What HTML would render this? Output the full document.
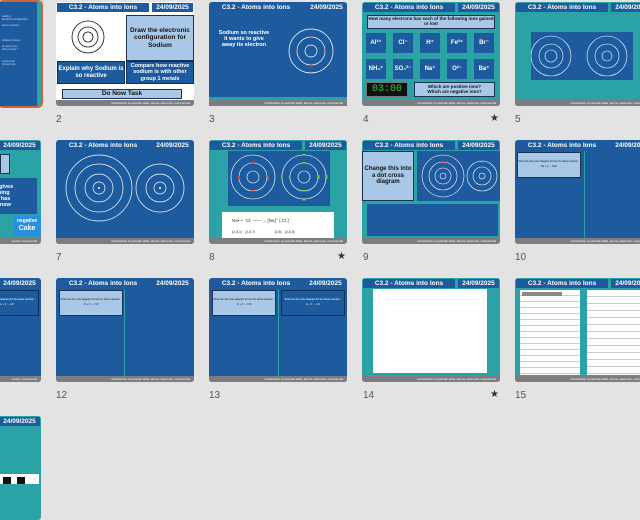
<!DOCTYPE html>
<html><head><meta charset="utf-8"><style>
*{margin:0;padding:0;box-sizing:border-box}
body{width:640px;height:480px;background:#e3e3e3;position:relative;overflow:hidden;font-family:"Liberation Sans",sans-serif}
.s{position:absolute;width:138px;height:104px;border-radius:3px;overflow:hidden;background:#2ba2a6}
.hd{position:absolute;top:1px;left:1px;width:92px;height:9px;background:#1d5b9e;color:#fff;font-size:6.5px;font-weight:bold;text-align:center;line-height:9px}
.dt{position:absolute;top:1px;left:96px;width:41px;height:9px;background:#1d5b9e;color:#fff;font-size:6.5px;font-weight:bold;text-align:center;line-height:9px}
.ft{position:absolute;bottom:0;left:0;width:138px;height:6px;background:#7b7d80;color:#fff;font-size:3px;line-height:6px;text-align:right;padding-right:4px}
.b{position:absolute;font-weight:bold;text-align:center;display:flex;align-items:center;justify-content:center;line-height:1.1}
.lb{background:#a9c8e8;border:1px solid #203050;color:#111}
.db{background:#1d5b9e;color:#fff;border:1px solid #0e2f55}
.n{position:absolute;font-size:10px;color:#555}
.st{position:absolute;font-size:10px;color:#333}
svg{position:absolute}
</style></head><body>

<!-- slide 1 (selected) -->
<div style="position:absolute;left:-2px;top:0;width:45px;height:108px;border:2px solid #d2643a;border-radius:5px"></div>
<div class="s" style="left:-97px;top:2px;background:#1d5b9e;border-right:4px solid #2ba2a6"></div>
<div style="position:absolute;left:2px;top:15px;width:30px;font-size:2.5px;color:#cde;line-height:3px">reading<br>Electronic configuration<br><br>atoms and ions<br><br><br><br><br>between Groups<br><br>to react in the<br>with a Group 7<br><br><br><br>compounds<br>formed ionic</div>

<!-- slide 2 -->
<div class="s" style="left:56px;top:2px;background:#fff">
<div class="hd">C3.2 - Atoms into Ions</div><div class="dt">24/09/2025</div>
<svg width="60" height="50" style="left:2px;top:10px"><g fill="none" stroke="#111" stroke-width="0.8"><circle cx="30" cy="25" r="16"/><circle cx="30" cy="25" r="10"/><circle cx="30" cy="25" r="5"/></g></svg>
<div class="b lb" style="left:70px;top:13px;width:68px;height:46px;font-size:6.5px">Draw the electronic configuration for Sodium</div>
<div class="b db" style="left:1px;top:59px;width:68px;height:23px;font-size:6px">Explain why Sodium is so reactive</div>
<div class="b db" style="left:70px;top:59px;width:68px;height:23px;font-size:5.5px">Compare how reactive sodium is with other group 1 metals</div>
<div class="b lb" style="left:6px;top:87px;width:120px;height:10px;font-size:6.5px">Do Now Task</div>
<div class="ft">Introduction to periodic table, atoms, elements, compounds</div>
</div>

<!-- slide 3 -->
<div class="s" style="left:209px;top:2px;background:#1d5b9e;border-bottom:9px solid #2ba2a6">
<div class="hd">C3.2 - Atoms into Ions</div><div class="dt" style="left:97px">24/09/2025</div>
<div class="b" style="left:8px;top:28px;width:54px;font-size:5.5px;color:#fff">Sodium so reactive it wants to give away its electron</div>
<svg width="50" height="50" style="left:78px;top:25px"><g fill="none" stroke="#fff" stroke-width="0.7"><circle cx="24" cy="24" r="22"/><circle cx="24" cy="24" r="14"/><circle cx="24" cy="24" r="6"/></g><g fill="#e55"><circle cx="24" cy="10" r="1.2"/><circle cx="24" cy="38" r="1.2"/><circle cx="10" cy="24" r="1.2"/><circle cx="38" cy="24" r="1.2"/></g></svg>
</div>
<div class="ft" style="left:209px;top:100px;position:absolute">Introduction to periodic table, atoms, elements, compounds</div>

<!-- slide 4 -->
<div class="s" style="left:362px;top:2px">
<div class="hd">C3.2 - Atoms into Ions</div><div class="dt">24/09/2025</div>
<div class="b lb" style="left:5px;top:13px;width:128px;height:14px;font-size:4.5px">How many electrons has each of the following ions gained or lost</div>
<div class="b db" style="left:4px;top:31px;width:20px;height:20px;font-size:6px;border:none">Al³⁺</div>
<div class="b db" style="left:31px;top:31px;width:20px;height:20px;font-size:6px;border:none">Cl⁻</div>
<div class="b db" style="left:58px;top:31px;width:20px;height:20px;font-size:6px;border:none">H⁺</div>
<div class="b db" style="left:85px;top:31px;width:20px;height:20px;font-size:6px;border:none">Fe³⁺</div>
<div class="b db" style="left:112px;top:31px;width:20px;height:20px;font-size:6px;border:none">Br⁻</div>
<div class="b db" style="left:4px;top:57px;width:20px;height:20px;font-size:6px;border:none">NH₄⁺</div>
<div class="b db" style="left:31px;top:57px;width:20px;height:20px;font-size:6px;border:none">SO₄²⁻</div>
<div class="b db" style="left:58px;top:57px;width:20px;height:20px;font-size:6px;border:none">Na⁺</div>
<div class="b db" style="left:85px;top:57px;width:20px;height:20px;font-size:6px;border:none">O²⁻</div>
<div class="b db" style="left:112px;top:57px;width:20px;height:20px;font-size:6px;border:none">Ba⁺</div>
<div class="b" style="left:4px;top:80px;width:42px;height:15px;background:#111;border:1px solid #777;color:#3c3;font-family:'Liberation Mono',monospace;font-size:10px;font-weight:normal">03:00</div>
<div class="b lb" style="left:52px;top:80px;width:81px;height:15px;font-size:4.5px">Which are positive ions?<br>Which are negative ions?</div>
<div class="ft">Introduction to periodic table, atoms, elements, compounds</div>
</div>
<div class="st" style="left:490px;top:113px">★</div>
<div class="n" style="left:363px;top:114px">4</div>

<!-- slide 5 -->
<div class="s" style="left:515px;top:2px">
<div class="hd">C3.2 - Atoms into Ions</div><div class="dt">24/09/2025</div>
<div style="position:absolute;left:16px;top:30px;width:102px;height:48px;background:#1d5b9e"></div>
<svg width="110" height="50" style="left:16px;top:30px"><g fill="none" stroke="#fff" stroke-width="0.6"><circle cx="20" cy="24" r="20"/><circle cx="20" cy="24" r="12"/><circle cx="20" cy="24" r="6"/><circle cx="76" cy="24" r="20"/><circle cx="76" cy="24" r="12"/><circle cx="76" cy="24" r="5"/></g></svg>
<div class="ft">Introduction to periodic table, atoms, elements, compounds</div>
</div>
<div class="n" style="left:56px;top:114px">2</div>
<div class="n" style="left:209px;top:114px">3</div>
<div class="n" style="left:515px;top:114px">5</div>

<!-- row 2 -->
<!-- slide 6 -->
<div class="s" style="left:-97px;top:140px">
<div class="dt">24/09/2025</div>
<div style="position:absolute;left:97px;top:14px;width:10px;height:20px;background:#a9c8e8;border:1px solid #203050"></div>
<div class="b db" style="left:90px;top:38px;width:44px;height:36px;font-size:5.5px;justify-content:flex-start;border:none">al gives<br>ming<br>h has<br>s now</div>
<div class="b" style="left:110px;top:76px;width:28px;height:20px;background:#2a8fe0;color:#fff;font-size:5px;flex-direction:column">negative<br><span style="font-size:7px">Cake</span></div>
<div class="ft">ments, compounds</div>
</div>

<!-- slide 7 -->
<div class="s" style="left:56px;top:140px;background:#1d5b9e">
<div class="hd">C3.2 - Atoms into Ions</div><div class="dt">24/09/2025</div>
<svg width="138" height="85" style="left:0;top:12px"><g fill="none" stroke="#fff" stroke-width="0.7"><circle cx="43" cy="36" r="33"/><circle cx="43" cy="36" r="24"/><circle cx="43" cy="36" r="14"/><circle cx="43" cy="36" r="6"/><circle cx="104" cy="36" r="24"/><circle cx="104" cy="36" r="14"/><circle cx="104" cy="36" r="6"/></g><circle cx="43" cy="36" r="1" fill="#fff"/><circle cx="104" cy="36" r="1" fill="#fff"/></svg>
<div class="ft">Introduction to periodic table, atoms, elements, compounds</div>
</div>

<!-- slide 8 -->
<div class="s" style="left:209px;top:140px">
<div class="hd">C3.2 - Atoms into Ions</div><div class="dt">24/09/2025</div>
<div style="position:absolute;left:19px;top:11px;width:102px;height:55px;background:#1d5b9e"></div>
<svg width="102" height="55" style="left:19px;top:11px"><g fill="none" stroke="#fff" stroke-width="0.6"><circle cx="25" cy="26" r="22"/><circle cx="25" cy="26" r="14"/><circle cx="25" cy="26" r="6"/><circle cx="76" cy="26" r="22"/><circle cx="76" cy="26" r="14"/><circle cx="76" cy="26" r="6"/></g><g fill="#e55"><rect x="23" y="11" width="4" height="1.5"/><rect x="23" y="39" width="4" height="1.5"/><rect x="10" y="25" width="1.5" height="4"/><rect x="39" y="25" width="1.5" height="4"/></g><g fill="#7c3"><rect x="74" y="3" width="4" height="1.5"/><rect x="74" y="48" width="4" height="1.5"/><rect x="74" y="11" width="4" height="1.5"/><rect x="74" y="39" width="4" height="1.5"/><rect x="61" y="24" width="1.5" height="4"/><rect x="90" y="24" width="1.5" height="4"/><rect x="53" y="24" width="1.5" height="4"/><rect x="98" y="24" width="1.5" height="4"/></g></svg>
<div style="position:absolute;left:13px;top:72px;width:112px;height:28px;background:#fff;font-size:4.5px;color:#333">
<div style="position:absolute;left:10px;top:6px">Na• + ·Cl:  ——→  [Na]⁺ [:Cl:]⁻</div>
<div style="position:absolute;left:10px;top:18px;font-size:3.5px">(2,8,1)&nbsp;&nbsp;&nbsp;(2,8,7)&nbsp;&nbsp;&nbsp;&nbsp;&nbsp;&nbsp;&nbsp;&nbsp;&nbsp;&nbsp;&nbsp;&nbsp;&nbsp;&nbsp;&nbsp;&nbsp;&nbsp;&nbsp;&nbsp;&nbsp;(2,8)&nbsp;&nbsp;&nbsp;(2,8,8)</div>
</div>
<div class="ft">Introduction to periodic table, atoms, elements, compounds</div>
</div>
<div class="st" style="left:337px;top:251px">★</div>

<!-- slide 9 -->
<div class="s" style="left:362px;top:140px">
<div class="hd">C3.2 - Atoms into Ions</div><div class="dt">24/09/2025</div>
<div class="b lb" style="left:0;top:11px;width:52px;height:50px;font-size:6px">Change this into a dot cross diagram</div>
<div style="position:absolute;left:55px;top:11px;width:83px;height:50px;background:#1d5b9e"></div>
<svg width="83" height="50" style="left:55px;top:11px"><g fill="none" stroke="#fff" stroke-width="0.6"><circle cx="26" cy="25" r="21"/><circle cx="26" cy="25" r="14"/><circle cx="26" cy="25" r="8"/><circle cx="26" cy="25" r="3"/><circle cx="65" cy="25" r="15"/><circle cx="65" cy="25" r="9"/><circle cx="65" cy="25" r="3"/></g><g fill="#e55"><rect x="24" y="4" width="4" height="1.2"/><rect x="24" y="11" width="4" height="1.2"/><rect x="24" y="38" width="4" height="1.2"/></g><rect x="63" y="10" width="4" height="1.2" fill="#7c3"/></svg>
<div style="position:absolute;left:5px;top:64px;width:131px;height:32px;background:#1d5b9e"></div>
<div class="ft">Introduction to periodic table, atoms, elements, compounds</div>
</div>

<!-- slide 10 -->
<div class="s" style="left:515px;top:140px;background:#1d5b9e">
<div class="hd">C3.2 - Atoms into Ions</div><div class="dt">24/09/2025</div>
<div style="position:absolute;left:69px;top:11px;width:1px;height:87px;background:#2ba2a6"></div>
<div class="b lb" style="left:2px;top:12px;width:64px;height:26px;font-size:2.5px;font-weight:normal;flex-direction:column">Draw the dot cross diagram for the the below reaction :<br><br>Na + F → NaF</div>
<div class="ft">Introduction to periodic table, atoms, elements, compounds</div>
</div>
<div class="n" style="left:56px;top:252px">7</div>
<div class="n" style="left:209px;top:252px">8</div>
<div class="n" style="left:363px;top:252px">9</div>
<div class="n" style="left:515px;top:252px">10</div>

<!-- row 3 -->
<div class="s" style="left:-97px;top:278px;background:#1d5b9e">
<div class="dt">24/09/2025</div>
<div class="b db" style="left:72px;top:12px;width:64px;height:26px;font-size:2.5px;font-weight:normal;flex-direction:column">Draw the dot cross diagram for the below reaction :<br><br>Li + F → LiF</div>
<div class="ft">ments, compounds</div>
</div>
<div class="s" style="left:56px;top:278px;background:#1d5b9e">
<div class="hd">C3.2 - Atoms into Ions</div><div class="dt">24/09/2025</div>
<div style="position:absolute;left:68px;top:11px;width:1px;height:87px;background:#2ba2a6"></div>
<div class="b lb" style="left:3px;top:12px;width:64px;height:26px;font-size:2.5px;font-weight:normal;flex-direction:column">Draw the dot cross diagram for the the below reaction :<br><br>Fr + F → FrF</div>
<div class="ft">Introduction to periodic table, atoms, elements, compounds</div>
</div>
<div class="s" style="left:209px;top:278px;background:#1d5b9e">
<div class="hd">C3.2 - Atoms into Ions</div><div class="dt">24/09/2025</div>
<div style="position:absolute;left:69px;top:11px;width:1px;height:87px;background:#2ba2a6"></div>
<div class="b lb" style="left:3px;top:12px;width:64px;height:26px;font-size:2.5px;font-weight:normal;flex-direction:column">Draw the dot cross diagram for the the below reaction :<br><br>Fr + F → FrF</div>
<div class="b db" style="left:72px;top:12px;width:64px;height:26px;font-size:2.5px;font-weight:normal;flex-direction:column">Draw the dot cross diagram for the below reaction :<br><br>Li + F → LiF</div>
<div class="ft">Introduction to periodic table, atoms, elements, compounds</div>
</div>
<div class="s" style="left:362px;top:278px">
<div class="hd">C3.2 - Atoms into Ions</div><div class="dt">24/09/2025</div>
<div style="position:absolute;left:11px;top:11px;width:114px;height:84px;background:#fff"></div>
<div class="ft">Introduction to periodic table, atoms, elements, compounds</div>
</div>
<div class="st" style="left:490px;top:389px">★</div>
<div class="s" style="left:515px;top:278px">
<div class="hd">C3.2 - Atoms into Ions</div><div class="dt">24/09/2025</div>
<div style="position:absolute;left:5px;top:12px;width:60px;height:85px;background:#fff;background-image:repeating-linear-gradient(#fff 0 5px,#ccc 5px 6px)"></div>
<div style="position:absolute;left:72px;top:12px;width:66px;height:85px;background:#fff;background-image:repeating-linear-gradient(#fff 0 6px,#ccc 6px 7px)"></div>
<div style="position:absolute;left:7px;top:14px;width:40px;height:4px;background:#888"></div>
<div class="ft">Introduction to periodic table, atoms, elements, compounds</div>
</div>
<div class="n" style="left:56px;top:390px">12</div>
<div class="n" style="left:209px;top:390px">13</div>
<div class="n" style="left:363px;top:390px">14</div>
<div class="n" style="left:515px;top:390px">15</div>

<!-- row 4 -->
<div class="s" style="left:-97px;top:416px">
<div class="dt">24/09/2025</div>
<div style="position:absolute;left:96px;top:58px;width:40px;height:10px;background:#fff"></div>
<div style="position:absolute;left:100px;top:61px;width:8px;height:7px;background:#111"></div>
<div style="position:absolute;left:114px;top:61px;width:8px;height:7px;background:#111"></div>
</div>
</body></html>
